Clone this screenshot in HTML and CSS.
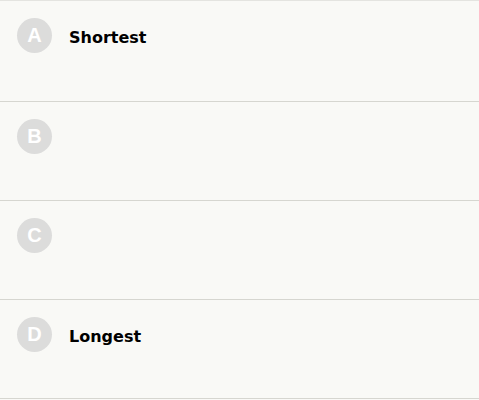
FILE: index.html
```html
<!DOCTYPE html>
<html lang="en">
<head>
  <meta charset="UTF-8">
  <meta name="viewport" content="width=device-width, initial-scale=1.0">
  <title>Options</title>
  <link rel="stylesheet" href="styles.css">
</head>
<body>
  <ul class="options">
    <li class="option first">
      <span class="badge">A</span>
      <span class="label">Shortest</span>
    </li>
    <li class="option">
      <span class="badge">B</span>
      <span class="label"></span>
    </li>
    <li class="option">
      <span class="badge">C</span>
      <span class="label"></span>
    </li>
    <li class="option">
      <span class="badge">D</span>
      <span class="label">Longest</span>
    </li>
  </ul>
</body>
</html>
```

FILE: styles.css
```css
body {
  margin: 0;
  background-color: #f9f9f6;
  font-family: "DejaVu Sans", Verdana, sans-serif;
}

.options {
  list-style: none;
  margin: 0;
  padding: 0;
  border-top: 1px solid #e4e4e0;
}

.option {
  display: flex;
  align-items: flex-start;
  gap: 17px;
  height: 99px;
  padding: 17px 17px 0;
  box-sizing: border-box;
  border-bottom: 1px solid #d6d6d0;
}

.option.first {
  height: 101px;
}

.badge {
  flex: none;
  width: 35px;
  height: 35px;
  border-radius: 50%;
  background-color: #dcdcdb;
  color: #fff;
  display: flex;
  align-items: center;
  justify-content: center;
  font-family: "Liberation Sans", Arial, sans-serif;
  font-weight: bold;
  font-size: 20px;
}

.label {
  padding-top: 2px;
  font-weight: bold;
  font-size: 16px;
  line-height: 35px;
  color: #000;
}
```
